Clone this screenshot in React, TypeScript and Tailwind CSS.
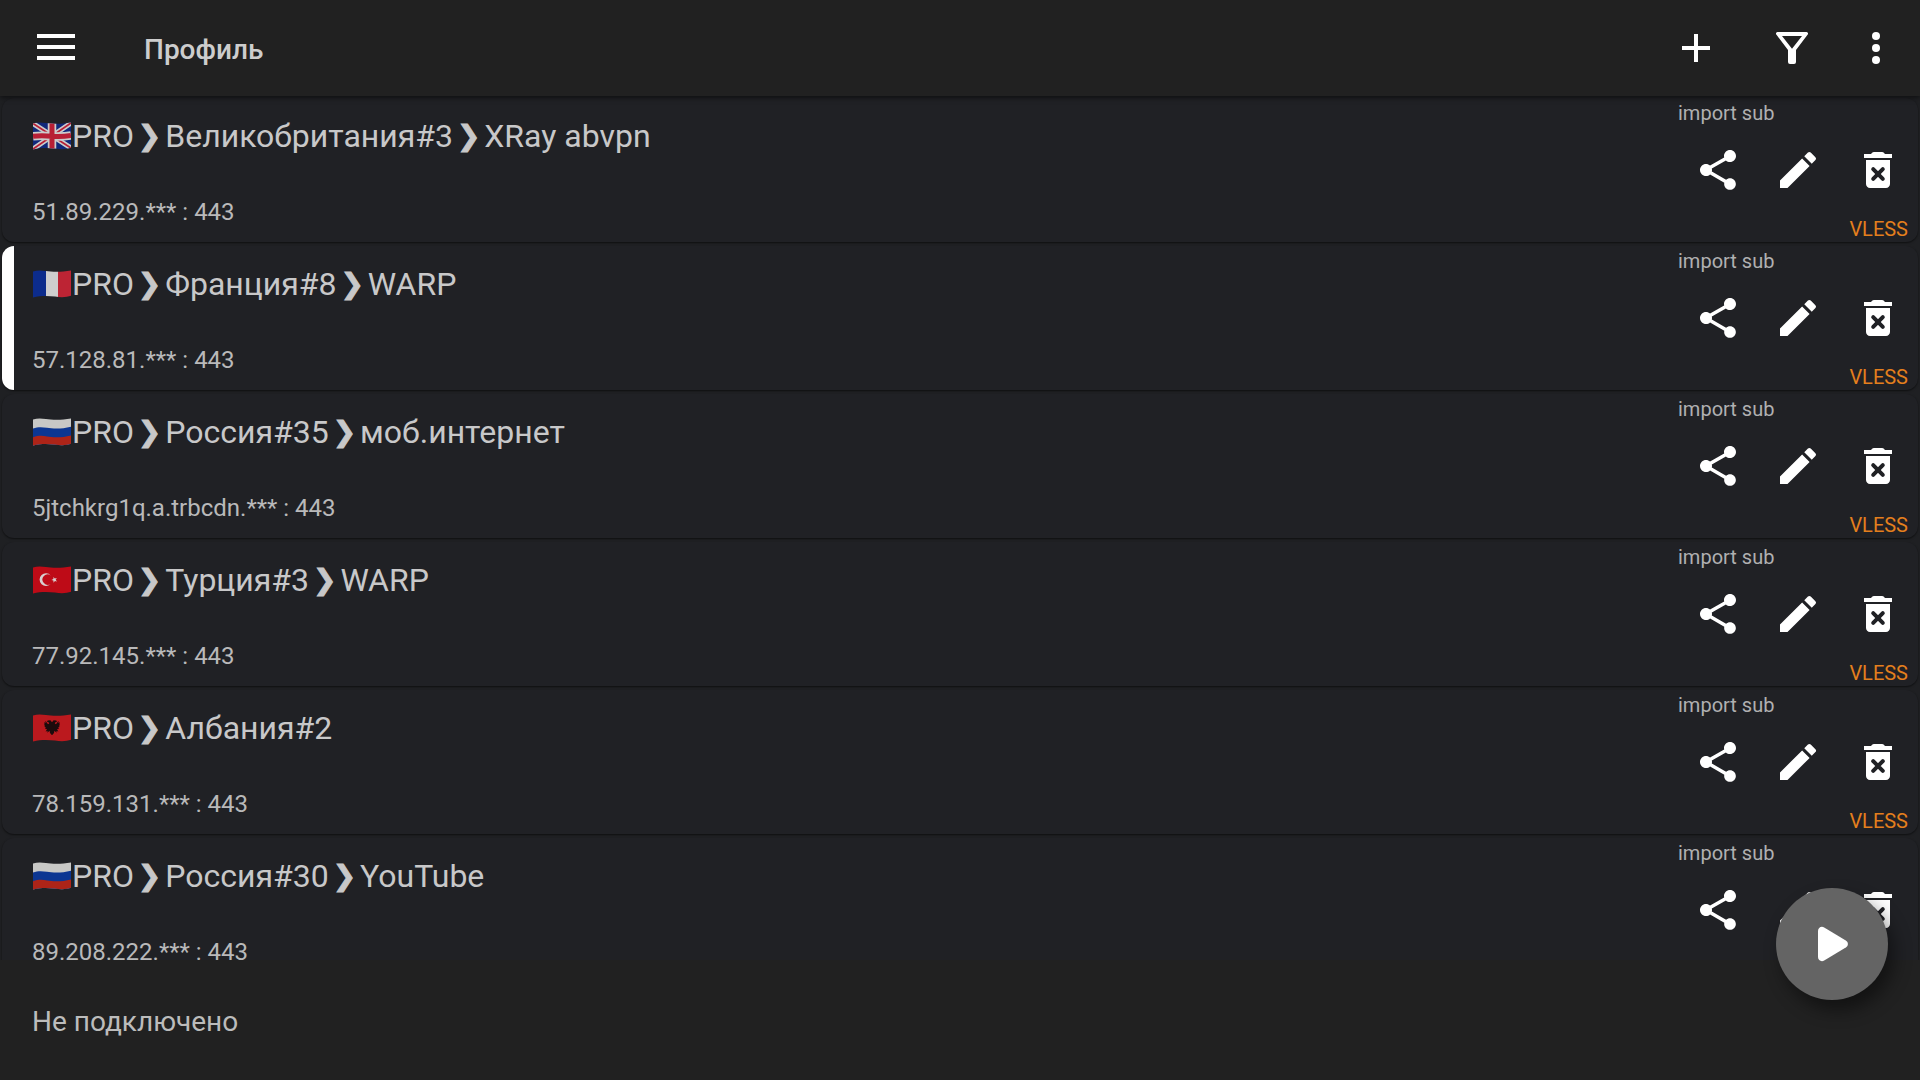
import { Fragment, type ReactNode } from "react";

type Country = "gb" | "fr" | "ru" | "tr" | "al";

interface Profile {
  flag: Country;
  parts: string[];
  address: string;
  selected?: boolean;
}

const profiles: Profile[] = [
  { flag: "gb", parts: ["PRO", "Великобритания#3", "XRay abvpn"], address: "51.89.229.*** : 443" },
  { flag: "fr", parts: ["PRO", "Франция#8", "WARP"], address: "57.128.81.*** : 443", selected: true },
  { flag: "ru", parts: ["PRO", "Россия#35", "моб.интернет"], address: "5jtchkrg1q.a.trbcdn.*** : 443" },
  { flag: "tr", parts: ["PRO", "Турция#3", "WARP"], address: "77.92.145.*** : 443" },
  { flag: "al", parts: ["PRO", "Албания#2"], address: "78.159.131.*** : 443" },
  { flag: "ru", parts: ["PRO", "Россия#30", "YouTube"], address: "89.208.222.*** : 443" },
];

const WAVE = "M0 1.4C4 .4 8 .4 13 1.1S27 2.6 38 .6V25.8C34 27.3 28 27.5 22 26.6S8 25.4 0 27.4Z";

function flagArt(country: Country): ReactNode {
  switch (country) {
    case "gb":
      return (
        <>
          <rect width="38" height="28" fill="#10287a" />
          <path d="M0 1.5 38 26M38 1 0 27" stroke="#cbcbcb" strokeWidth="5" />
          <path d="M0 1.5 38 26M38 1 0 27" stroke="#b81f35" strokeWidth="1.8" />
          <path d="M19 0V28M0 14.2C8 13.2 13 13.6 19 14.2S30 14.8 38 13.4" stroke="#cbcbcb" strokeWidth="8.5" fill="none" />
          <path d="M19 0V28M0 14.2C8 13.2 13 13.6 19 14.2S30 14.8 38 13.4" stroke="#b81f35" strokeWidth="5" fill="none" />
        </>
      );
    case "fr":
      return (
        <>
          <rect width="13" height="28" fill="#0c2c8c" />
          <rect x="13" width="12" height="28" fill="#cecece" />
          <rect x="25" width="13" height="28" fill="#bd2434" />
        </>
      );
    case "ru":
      return (
        <>
          <rect width="38" height="28" fill="#c8c8c6" />
          <path d="M0 10.4C5 8.8 9 9 14 9.8S28 11.4 38 8.8V28H0Z" fill="#0c3692" />
          <path d="M0 19.2C5 17.6 9 17.6 14 18.4S28 20 38 17.4V28H0Z" fill="#ad2418" />
        </>
      );
    case "tr":
      return (
        <>
          <rect width="38" height="28" fill="#be0b17" />
          <path d="M17.8 9.4A6.4 6.4 0 1 0 17.8 17.8A5.2 5.2 0 1 1 17.8 9.4Z" fill="#d8cfcf" />
          <path d="m18.4 13.9 2-.8v-2.1l1.4 1.6 2-.7-1.1 1.9 1.3 1.8-2.1-.5-1.3 1.7-.2-2.2Z" fill="#d8cfcf" />
        </>
      );
    case "al":
      return (
        <>
          <rect width="38" height="28" fill="#bb191e" />
          <path
            d="M19 8.2 17.4 6.2 14.8 6.4 13.8 7.6 15.6 8.2 16.2 9.6 15 10.2 12.4 6.8 12.6 9 11 8.2 11.8 10.4 10.8 10.6 12.2 12.2 11.2 12.6 13 13.8 11.8 14.6 14 15.2 12.6 17.4 14.6 17 14.4 18.8 16.6 16.8 17 19 19 21.2 21 19 21.4 16.8 23.6 18.8 23.4 17 25.4 17.4 24 15.2 26.2 14.6 25 13.8 26.8 12.6 25.8 12.2 27.2 10.6 26.2 10.4 27 8.2 25.4 9 25.6 6.8 23 10.2 21.8 9.6 22.4 8.2 24.2 7.6 23.2 6.4 20.6 6.2Z"
            fill="#1c0b0c"
          />
        </>
      );
  }
}

function Flag({ country, id }: { country: Country; id: string }) {
  return (
    <svg viewBox="0 0 38 28" className="mx-px h-7 w-[38px] shrink-0" aria-hidden="true">
      <clipPath id={id}>
        <path d={WAVE} />
      </clipPath>
      <g clipPath={`url(#${id})`}>{flagArt(country)}</g>
    </svg>
  );
}

function Icon({ children }: { children: ReactNode }) {
  return (
    <svg viewBox="0 0 24 24" className="size-12" fill="currentColor" aria-hidden="true">
      {children}
    </svg>
  );
}

function IconButton({ label, children }: { label: string; children: ReactNode }) {
  return (
    <button type="button" aria-label={label} className="flex size-20 items-center justify-center text-white">
      <Icon>{children}</Icon>
    </button>
  );
}

function Chevron() {
  return <span className="-mx-1 align-[2px] text-[28px] leading-none [-webkit-text-stroke:1px_#c8c8c9]">❯</span>;
}

function ProfileRow({ profile, index }: { profile: Profile; index: number }) {
  return (
    <li className="shrink-0 p-0.5">
      <article className="flex h-36 overflow-hidden rounded-xl bg-[#202125] shadow-[0_1px_2px_rgba(0,0,0,0.55)]">
        <div className={profile.selected ? "w-3 shrink-0 bg-white" : "w-3 shrink-0"} />
        <div className="flex min-w-0 flex-1 flex-col justify-between pt-5 pb-4 pl-[18px]">
          <h2 className="flex items-center text-[32px] leading-9 whitespace-pre text-[#c8c8c9]">
            <Flag country={profile.flag} id={`flag-${index}`} />
            <span>
              {profile.parts.map((part, i) => (
                <Fragment key={part}>
                  {i > 0 && (
                    <>
                      {" "}
                      <Chevron />{" "}
                    </>
                  )}
                  {part}
                </Fragment>
              ))}
            </span>
          </h2>
          <p className="text-2xl leading-7 text-[#b9b9ba]">{profile.address}</p>
        </div>
        <div className="flex w-60 shrink-0 flex-col pt-1">
          <span className="h-7 text-xl leading-[22px] text-[#b0b0b1]">import sub</span>
          <div className="flex">
            <IconButton label="Поделиться">
              <path d="M18 16.08c-.76 0-1.44.3-1.96.77L8.91 12.7c.05-.23.09-.46.09-.7s-.04-.47-.09-.7l7.05-4.11c.54.5 1.25.81 2.04.81 1.66 0 3-1.34 3-3s-1.34-3-3-3-3 1.34-3 3c0 .24.04.47.09.7L8.04 9.81C7.5 9.31 6.79 9 6 9c-1.66 0-3 1.34-3 3s1.34 3 3 3c.79 0 1.5-.31 2.04-.81l7.12 4.16c-.05.21-.08.43-.08.65 0 1.61 1.31 2.92 2.92 2.92s2.92-1.31 2.92-2.92-1.31-2.92-2.92-2.92z" />
            </IconButton>
            <IconButton label="Изменить">
              <path d="M3 17.25V21h3.75L17.81 9.94l-3.75-3.75L3 17.25zM20.71 7.04a1 1 0 0 0 0-1.41l-2.34-2.34a1 1 0 0 0-1.41 0l-1.83 1.83 3.75 3.75 1.83-1.83z" />
            </IconButton>
            <IconButton label="Удалить">
              <path d="M6 19c0 1.1.9 2 2 2h8c1.1 0 2-.9 2-2V7H6v12zM15.5 4l-.7-.7a1 1 0 0 0-.7-.3H9.9a1 1 0 0 0-.7.3l-.7.7H5v2h14V4z" />
              <path d="m9.6 11.6 4.8 4.8m0-4.8-4.8 4.8" stroke="#202125" strokeWidth="2" strokeLinecap="round" />
            </IconButton>
          </div>
          <span className="mt-auto pr-2.5 pb-0.5 text-right text-xl leading-[22px] text-[#e47f1d]">VLESS</span>
        </div>
      </article>
    </li>
  );
}

export default function App() {
  return (
    <div className="flex h-screen flex-col overflow-hidden bg-[#1f2023] font-[Roboto,'DejaVu_Sans',sans-serif]">
      <header className="z-10 flex h-24 shrink-0 items-center bg-[#212121] pr-5 pl-4 shadow-[0_2px_5px_rgba(0,0,0,0.5)]">
        <button type="button" aria-label="Меню" className="flex size-20 items-center justify-center text-white">
          <svg viewBox="0 0 38 28" className="h-7 w-[38px]" fill="currentColor" aria-hidden="true">
            <path d="M0 0h38v4H0zM0 11h38v4H0zM0 22h38v4H0z" />
          </svg>
        </button>
        <h1 className="ml-12 flex-1 pt-1 text-[28px] leading-8 font-medium text-[#cdcdcd]">Профиль</h1>
        <div className="flex items-center text-white">
          <button type="button" aria-label="Добавить" className="flex h-24 w-24 items-center justify-center">
            <Icon>
              <path d="M19 13h-6v6h-2v-6H5v-2h6V5h2v6h6z" />
            </Icon>
          </button>
          <button type="button" aria-label="Фильтр" className="flex h-24 w-24 items-center justify-center">
            <Icon>
              <path
                fillRule="evenodd"
                d="M4.8 4h14.4a.8.8 0 0 1 .65 1.3L14 13v6a1 1 0 0 1-1 1h-2a1 1 0 0 1-1-1v-6L4.15 5.3A.8.8 0 0 1 4.8 4zM7 6l5 6.4L17 6z"
              />
            </Icon>
          </button>
          <button type="button" aria-label="Ещё" className="ml-3 flex h-24 w-12 items-center justify-center">
            <Icon>
              <circle cx="12" cy="6" r="2" />
              <circle cx="12" cy="12" r="2" />
              <circle cx="12" cy="18" r="2" />
            </Icon>
          </button>
        </div>
      </header>

      <main className="min-h-0 flex-1 overflow-hidden">
        <ul className="flex flex-col">
          {profiles.map((profile, index) => (
            <ProfileRow key={profile.address} profile={profile} index={index} />
          ))}
        </ul>
      </main>

      <footer className="relative flex h-[120px] shrink-0 items-center bg-[#212121] px-8 pt-1">
        <p className="text-[28px] leading-8 text-[#bcbcbc]">Не подключено</p>
        <button
          type="button"
          aria-label="Подключить"
          className="absolute right-8 bottom-20 flex size-28 items-center justify-center rounded-full bg-[#646464] text-white shadow-[6px_10px_18px_rgba(0,0,0,0.45)]"
        >
          <svg viewBox="0 0 48 48" className="size-12" fill="currentColor" aria-hidden="true">
            <path d="M10 11v26c0 3.3 3.3 5.2 6.2 3.5l21.6-13c2.8-1.7 2.8-5.3 0-7l-21.6-13C13.3 5.8 10 7.7 10 11z" />
          </svg>
        </button>
      </footer>
    </div>
  );
}
